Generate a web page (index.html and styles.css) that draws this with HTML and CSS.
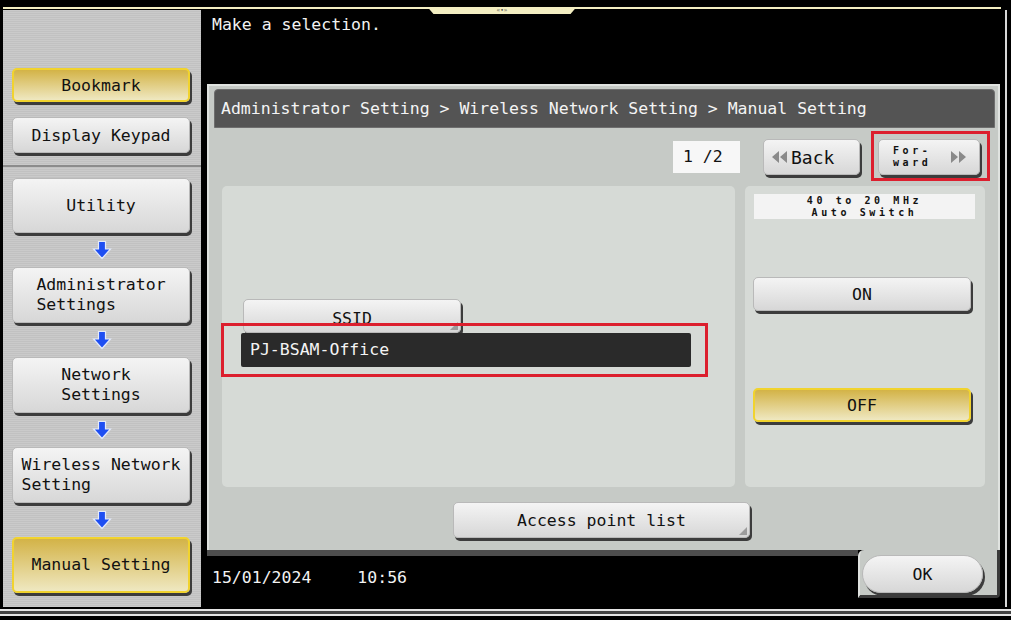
FILE: index.html
```html
<!DOCTYPE html>
<html lang="en">
<head>
    <meta charset="UTF-8">
    <meta name="viewport" content="width=device-width, initial-scale=1.0">
    <title>Manual Setting</title>
    <link rel="stylesheet" href="styles.css">
</head>
<body>
    <div class="screen">
        <div class="top-bar">
            <div class="top-tab">&laquo;&bull;&raquo;</div>
        </div>

        <div class="main">
            <aside class="side">
                <div class="side-top">
                    <button class="key key-yellow side-key bookmark">Bookmark</button>
                    <button class="key side-key keypad">Display Keypad</button>
                </div>
                <div class="side-path">
                    <button class="key path-key utility"><span>Utility</span></button>
                    <div class="path-arrow">
                        <svg width="20" height="20" viewBox="0 0 20 20"><path d="M6.5 1.5h7v7.5h5l-8.5 9.5-8.5-9.5h5z" fill="#1f4ff2" stroke="#e4ebfb" stroke-width="1.2"/></svg>
                    </div>
                    <button class="key path-key"><span>Administrator<br>Settings</span></button>
                    <div class="path-arrow">
                        <svg width="20" height="20" viewBox="0 0 20 20"><path d="M6.5 1.5h7v7.5h5l-8.5 9.5-8.5-9.5h5z" fill="#1f4ff2" stroke="#e4ebfb" stroke-width="1.2"/></svg>
                    </div>
                    <button class="key path-key"><span>Network<br>Settings</span></button>
                    <div class="path-arrow">
                        <svg width="20" height="20" viewBox="0 0 20 20"><path d="M6.5 1.5h7v7.5h5l-8.5 9.5-8.5-9.5h5z" fill="#1f4ff2" stroke="#e4ebfb" stroke-width="1.2"/></svg>
                    </div>
                    <button class="key path-key"><span>Wireless Network<br>Setting</span></button>
                    <div class="path-arrow">
                        <svg width="20" height="20" viewBox="0 0 20 20"><path d="M6.5 1.5h7v7.5h5l-8.5 9.5-8.5-9.5h5z" fill="#1f4ff2" stroke="#e4ebfb" stroke-width="1.2"/></svg>
                    </div>
                    <button class="key key-yellow path-key"><span>Manual Setting</span></button>
                </div>
            </aside>

            <section class="work">
                <div class="message">Make a selection.</div>

                <div class="panel">
                    <div class="crumb">Administrator Setting &gt; Wireless Network Setting &gt; Manual Setting</div>

                    <div class="pager-row">
                        <div class="page-count">1 /2</div>
                        <button class="key nav-key back">
                            <svg width="17" height="14" viewBox="0 0 17 14"><path d="M8 1 1 7l7 6zM16 1 9 7l7 6z" fill="#8a8a8a"/></svg>
                            <span>Back</span>
                        </button>
                        <div class="marked">
                            <button class="key nav-key forward">
                                <span class="tiny">For-<br>ward</span>
                                <svg width="17" height="14" viewBox="0 0 17 14"><path d="M1 1l7 6-7 6zM9 1l7 6-7 6z" fill="#8a8a8a"/></svg>
                            </button>
                            <div class="annot annot-forward"></div>
                        </div>
                    </div>

                    <div class="content-row">
                        <div class="box box-ssid">
                            <button class="key ssid-key has-corner">SSID</button>
                            <div class="marked ssid-mark">
                                <div class="ssid-value">PJ-BSAM-Office</div>
                                <div class="annot annot-ssid"></div>
                            </div>
                        </div>
                        <div class="box box-switch">
                            <div class="switch-label"><span class="tiny">40 to 20 MHz<br>Auto Switch</span></div>
                            <button class="key switch-key on">ON</button>
                            <button class="key key-yellow switch-key off">OFF</button>
                        </div>
                    </div>

                    <div class="bottom-row">
                        <button class="key access-key has-corner">Access point list</button>
                    </div>
                </div>

                <div class="status">
                    <div class="clock">
                        <span>15/01/2024</span>
                        <span>10:56</span>
                    </div>
                    <div class="ok-tab">
                        <button class="key ok-key">OK</button>
                    </div>
                </div>
            </section>

            <div class="edge"></div>
        </div>

        <div class="base"></div>
    </div>
</body>
</html>
```

FILE: styles.css
```css
* {
    box-sizing: border-box;
}

body {
    margin: 0;
    background-color: #000;
    font-family: "DejaVu Sans Mono", monospace;
    font-size: 16.5px;
    color: #111;
}

.screen {
    width: 1011px;
    height: 620px;
    overflow: hidden;
    background-color: #000;
}

/* Top strip with the pull-down tab */
.top-bar {
    height: 10px;
    margin: 0 10px 0 3px;
    display: flex;
    justify-content: center;
    background: linear-gradient(#f3eec2, #f3eec2) no-repeat 0 7px / 100% 2px;
}

.top-tab {
    position: relative;
    z-index: 1;
    width: 149px;
    height: 7px;
    margin-top: 7px;
    background-color: #f3eec2;
    clip-path: polygon(0 0, 100% 0, 96% 100%, 4% 100%);
    font-size: 6px;
    line-height: 6px;
    text-align: center;
    color: #444;
}

.main {
    display: flex;
    height: 597px;
}

/* Left column */
.side {
    width: 198px;
    margin-left: 3px;
    margin-right: 6px;
    display: flex;
    flex-direction: column;
    background: repeating-linear-gradient(#cacaca 0 1px, #c1c1c1 1px 2px);
}

.side-top {
    height: 157px;
    padding-top: 58px;
    border-bottom: 2px solid #8c8c8c;
}

.side-key {
    display: block;
    width: 178px;
    margin-left: 9px;
}

.bookmark {
    height: 34px;
}

.keypad {
    height: 36px;
    margin-top: 15px;
}

.side-path {
    flex: 1;
    padding-top: 11px;
}

.path-key {
    display: flex;
    align-items: center;
    justify-content: center;
    width: 178px;
    height: 56px;
    margin-left: 9px;
}

.path-key.utility {
    height: 55px;
}

.path-key span {
    text-align: left;
    line-height: 20px;
}

.path-arrow {
    height: 34px;
    display: flex;
    align-items: center;
    justify-content: center;
}

/* Buttons */
.key {
    font: inherit;
    color: #111;
    padding: 0;
    border: 1px solid #b9b9b9;
    border-radius: 5px;
    background: linear-gradient(#f4f4f4, #d7d7d7);
    box-shadow: 2px 3px 0 #3c3c3c;
    cursor: pointer;
}

.key-yellow {
    border: 2px solid #f1d32e;
    background: linear-gradient(#d3b347, #efe8c1);
}

.has-corner {
    position: relative;
}

.has-corner::after {
    content: "";
    position: absolute;
    right: 2px;
    bottom: 2px;
    border-style: solid;
    border-width: 0 0 8px 8px;
    border-color: transparent transparent #9c9c9c transparent;
}

/* Right side work area */
.work {
    width: 793px;
    display: flex;
    flex-direction: column;
}

.message {
    height: 74px;
    padding: 5px 0 0 5px;
    line-height: 20px;
    color: #f2f2f2;
}

.panel {
    height: 466px;
    display: flex;
    flex-direction: column;
    padding: 3px 3px 0 5px;
    background-color: #c6cac6;
    border-top: 2px solid #e0e3e0;
    border-left: 2px solid #e0e3e0;
    border-right: 2px solid #e0e3e0;
}

.crumb {
    height: 39px;
    padding-left: 6px;
    line-height: 37px;
    color: #f4f4f4;
    background-color: #545454;
    border: 1px solid #6e6e6e;
    border-radius: 4px 4px 0 0;
    white-space: nowrap;
}

.pager-row {
    height: 58px;
    display: flex;
    align-items: center;
    justify-content: flex-end;
    padding-right: 15px;
}

.page-count {
    width: 67px;
    height: 32px;
    margin-right: 23px;
    padding-left: 10px;
    line-height: 32px;
    background-color: #f7f7f7;
}

.nav-key {
    height: 36px;
    display: flex;
    align-items: center;
}

.back {
    width: 97px;
    margin-right: 18px;
    padding-left: 7px;
    gap: 3px;
    font-size: 18px;
}

.forward {
    width: 102px;
    justify-content: space-between;
    padding: 0 12px 0 14px;
}

.marked {
    position: relative;
}

.annot {
    position: absolute;
    border: 3px solid #dc1f2e;
}

.annot-forward {
    top: -8px;
    left: -7px;
    right: -10px;
    bottom: -6px;
}

.annot-ssid {
    top: -10px;
    left: -20px;
    right: -17px;
    bottom: -10px;
}

.tiny {
    display: inline-block;
    font-size: 10px;
    line-height: 12px;
    letter-spacing: 3.6px;
    font-weight: bold;
}

.content-row {
    height: 301px;
    display: flex;
    gap: 10px;
    padding-left: 8px;
}

.box {
    background-color: #d6dad6;
    border-radius: 5px;
}

.box-ssid {
    width: 513px;
    padding-top: 113px;
}

.ssid-key {
    display: block;
    width: 218px;
    height: 34px;
    margin-left: 21px;
    padding-top: 5px;
}

.ssid-mark {
    width: 450px;
    margin-left: 19px;
}

.ssid-value {
    height: 34px;
    padding-left: 9px;
    line-height: 34px;
    color: #f4f4f4;
    background-color: #2a2a2a;
    border-radius: 2px;
}

.box-switch {
    width: 240px;
    display: flex;
    flex-direction: column;
}

.switch-label {
    width: 221px;
    height: 25px;
    margin: 8px 0 0 9px;
    padding-top: 1px;
    text-align: center;
    background-color: #f3f3f3;
}

.switch-key {
    width: 218px;
    height: 34px;
    margin-left: 8px;
}

.switch-key.on {
    margin-top: 58px;
}

.switch-key.off {
    margin-top: 77px;
}

.bottom-row {
    flex: 1;
    padding: 15px 0 0 239px;
}

.access-key {
    width: 297px;
    height: 36px;
}

/* Date line and OK */
.status {
    height: 57px;
    display: flex;
}

.clock {
    flex: 1;
    display: flex;
    gap: 46px;
    padding: 12px 0 0 5px;
    line-height: 20px;
    color: #f2f2f2;
    border-top: 6px solid #4e4e4e;
}

.ok-tab {
    width: 142px;
    height: 48px;
    padding: 5px 0 0 2px;
    background-color: #c6cac6;
    border-left: 2px solid #e0e3e0;
    border-right: 3px solid #3a3a3a;
    border-bottom: 3px solid #3a3a3a;
    border-radius: 6px 0 4px 0;
}

.ok-key {
    width: 121px;
    height: 38px;
    border-radius: 19px;
}

.edge {
    width: 11px;
    background: linear-gradient(to right, transparent 5px, #d8d8d8 5px 7px, transparent 7px);
}

.base {
    height: 7px;
    margin-top: 2px;
    background-color: #444;
    border-top: 2px solid #e6e6e6;
    border-bottom: 2px solid #e6e6e6;
}
```
